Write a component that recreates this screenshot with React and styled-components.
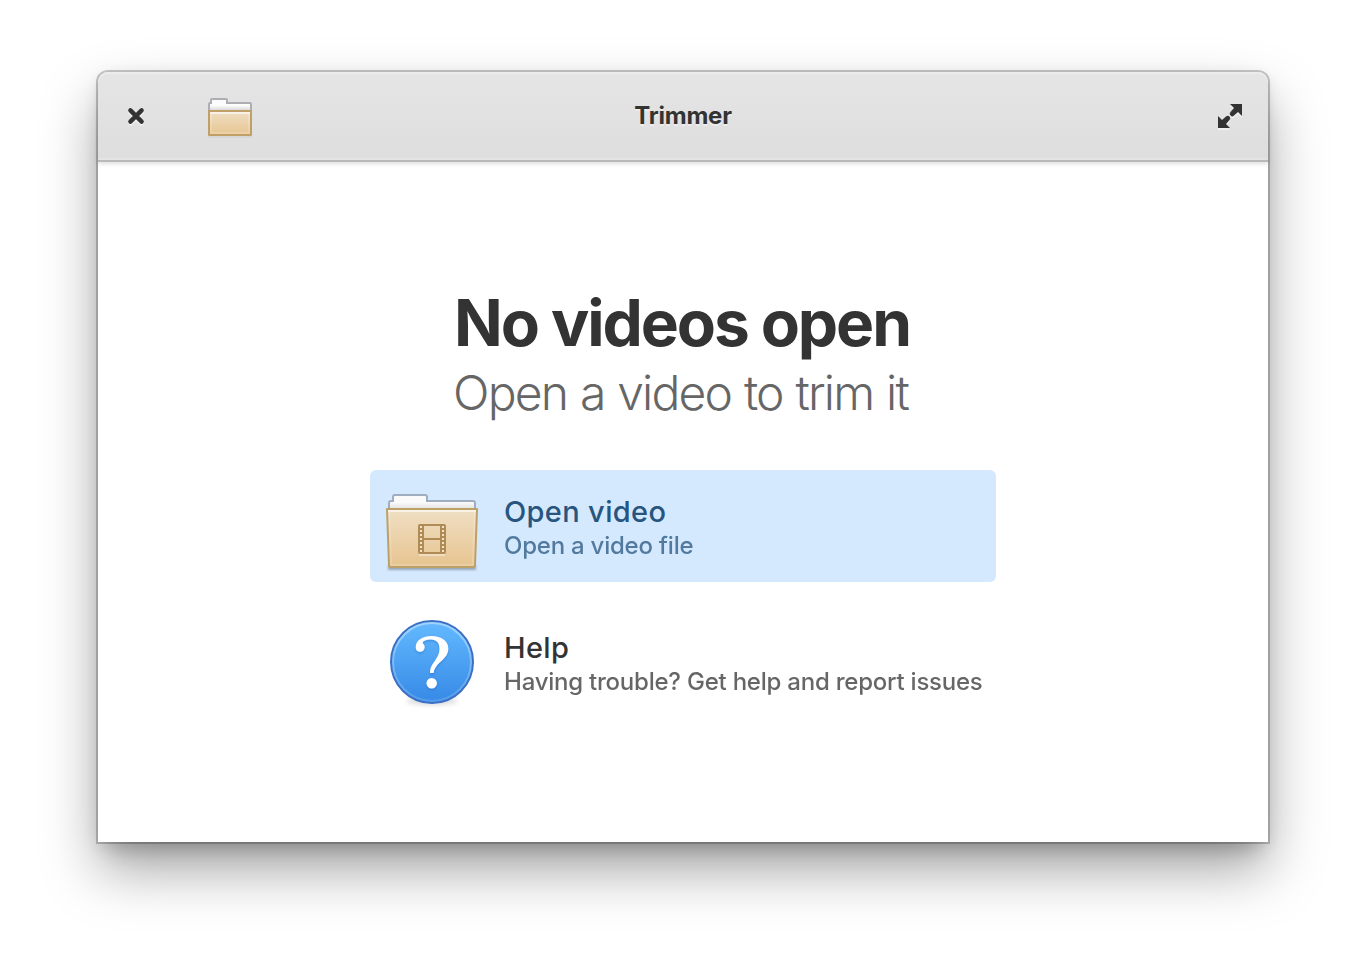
import React from "react";
import styled, { createGlobalStyle } from "styled-components";

const GlobalStyle = createGlobalStyle`
  * { box-sizing: border-box; }
  body { margin: 0; background: #fff; font-family: Inter, "Open Sans", sans-serif; color: #333; }
`;

const Desktop = styled.main`
  height: 966px;
  padding: 72px 98px 0;
  overflow: hidden;
`;

const Window = styled.section`
  height: 770px;
  display: flex;
  flex-direction: column;
  background: #fff;
  border-radius: 10px 10px 0 0;
  box-shadow: 0 0 0 2px rgba(0, 0, 0, 0.2), 0 28px 56px rgba(0, 0, 0, 0.35),
    0 20px 20px -10px rgba(0, 0, 0, 0.14), 0 4px 16px rgba(0, 0, 0, 0.09);
`;

const HeaderBar = styled.header`
  height: 90px;
  flex: none;
  display: grid;
  grid-template-columns: 1fr auto 1fr;
  align-items: center;
  padding: 0 22px 0 30px;
  border-radius: 10px 10px 0 0;
  border-bottom: 2px solid #b9b9b9;
  background: linear-gradient(#e5e5e5, #dedede);
  box-shadow: inset 0 2px 0 rgba(255, 255, 255, 0.28), inset 0 -2px 0 rgba(255, 255, 255, 0.2),
    0 2px 4px rgba(0, 0, 0, 0.13);
`;

const HeaderStart = styled.div`
  display: flex;
  align-items: center;
  gap: 60px;
`;

const HeaderEnd = styled.div`
  display: flex;
  justify-content: flex-end;
`;

const IconButton = styled.button`
  display: flex;
  padding: 0;
  border: 0;
  background: none;
  svg { display: block; overflow: visible; }
`;

const WindowTitle = styled.h1`
  margin: 0 8px 0 0;
  font-size: 24px;
  line-height: 30px;
  font-weight: 700;
  letter-spacing: -0.2px;
  text-shadow: 0 2px 0 rgba(255, 255, 255, 0.4);
`;

const Welcome = styled.div`
  flex: 1;
  display: flex;
  flex-direction: column;
  align-items: center;
  padding-top: 123px;
`;

const Heading = styled.h2`
  margin: 0 2px 0 0;
  font-size: 64px;
  line-height: 76px;
  font-weight: 700;
  letter-spacing: -2.1px;
  white-space: nowrap;
`;

const Subheading = styled.p`
  margin: 2px 5px 0 0;
  font-size: 48px;
  line-height: 60px;
  font-weight: 300;
  letter-spacing: -1.8px;
  word-spacing: 1px;
  color: #666;
  white-space: nowrap;
`;

const Actions = styled.div`
  width: 626px;
  margin-top: 47px;
  display: flex;
  flex-direction: column;
  gap: 24px;
`;

const Action = styled.button`
  height: 112px;
  padding: 0 14px;
  display: flex;
  align-items: center;
  gap: 24px;
  border: 0;
  border-radius: 6px;
  font-family: inherit;
  text-align: left;
  color: ${(p) => (p.$selected ? "#27557e" : "#333")};
  background: ${(p) => (p.$selected ? "#d4e9fe" : "transparent")};
  svg { display: block; flex: none; }
`;

const ActionText = styled.span`
  display: flex;
  flex-direction: column;
  padding-top: 6px;
`;

const ActionTitle = styled.span`
  font-size: 29px;
  line-height: 34px;
  font-weight: 500;
  letter-spacing: 0.35px;
`;

const ActionDescription = styled.span`
  font-size: 24px;
  line-height: 34px;
  font-weight: 500;
  letter-spacing: -0.23px;
  opacity: 0.75;
  white-space: nowrap;
`;

const CloseIcon = () => (
  <svg width="16" height="16" viewBox="0 0 16 16" fill="none" strokeWidth="4.4" strokeLinecap="round">
    <path d="M2.4 4.4l11.200 11.200M13.600 4.400L2.400 15.600" stroke="#fff" strokeOpacity=".5" />
    <path d="M2.400 2.400l11.200 11.200M13.600 2.400L2.400 13.600" stroke="#333" />
  </svg>
);

const MaximizeShape = () => (
  <>
    <path d="M12 0h12v12l-4-4-4 3.500a2.300 2.300 0 0 1-3.500-3.500l3.500-4z" />
    <path d="M12 24H0V12l4 4 4-3.500a2.300 2.300 0 0 1 3.500 3.500l-3.500 4z" />
  </>
);

const MaximizeIcon = () => (
  <svg width="28" height="24" viewBox="0 0 28 24">
    <g fill="#fff" opacity=".5" transform="translate(0 2)"><MaximizeShape /></g>
    <g fill="#333"><MaximizeShape /></g>
  </svg>
);

const FolderIcon = () => (
  <svg width="52" height="44" viewBox="-2 0 52 44">
    <defs>
      <linearGradient id="paperSmall" x1="0" y1="0" x2="0" y2="1">
        <stop offset=".5" stopColor="#fcfcfc" />
        <stop offset="1" stopColor="#ccc" />
      </linearGradient>
      <linearGradient id="frontSmall" x1="0" y1="0" x2="0" y2="1">
        <stop stopColor="#efdfc4" />
        <stop offset="1" stopColor="#e7c591" />
      </linearGradient>
    </defs>
    <path d="M2 43h44" stroke="#000" strokeOpacity=".04" strokeWidth="2" />
    <path d="M3 18V10q0-1 2-1V6q0-1 1-1h14q1 0 1 1v3h23q1 0 1 1v8z" fill="url(#paperSmall)" stroke="#acaeb3" strokeWidth="2" />
    <path d="M3 17h42v24H3z" fill="url(#frontSmall)" stroke="#c0a067" strokeWidth="2" strokeLinejoin="round" />
    <path d="M4 19h40" stroke="#fff" strokeOpacity=".6" strokeWidth="2" />
    <path d="M5 20v19h38V20" fill="none" stroke="#fff" strokeOpacity=".18" strokeWidth="2" />
  </svg>
);

const sprockets = [48, 52, 56, 60, 64, 68, 72];

const VideoFolderIcon = () => (
  <svg width="96" height="96" viewBox="0 0 96 96">
    <defs>
      <linearGradient id="paper" x1="0" y1="0" x2="0" y2="1">
        <stop offset=".5" stopColor="#fafafa" />
        <stop offset="1" stopColor="#ddd" />
      </linearGradient>
      <linearGradient id="front" x1="0" y1="0" x2="0" y2="1">
        <stop stopColor="#efdfc4" />
        <stop offset="1" stopColor="#e7c48f" />
      </linearGradient>
      <filter id="folderShadow" x="-10%" y="-200%" width="120%" height="500%">
        <feGaussianBlur stdDeviation="1.3" />
      </filter>
    </defs>
    <rect x="4" y="87" width="88" height="5" fill="#000" opacity=".28" filter="url(#folderShadow)" />
    <path d="M5 32V25q0-2 2-2h2v-4q0-2 2-2h30q2 0 2 2v4h46q2 0 2 2v7z" fill="url(#paper)" stroke="#a0adc0" strokeWidth="2" />
    <path d="M3 31h90l-2 56q0 2-2 2H7q-2 0-2-2z" fill="url(#front)" stroke="#bda066" strokeWidth="2" strokeLinejoin="round" />
    <path d="M4 33h88" stroke="#fff" strokeOpacity=".6" strokeWidth="2" />
    <path d="M5.2 34L7 87h82l1.800-53" fill="none" stroke="#fff" strokeOpacity=".18" strokeWidth="2" />
    <path d="M35 77h26" stroke="#fff" strokeOpacity=".4" strokeWidth="2" />
    <path d="M36 46h24q2 0 2 2v26q0 2-2 2H36q-2 0-2-2V48q0-2 2-2zM40 48v12h16V48zM40 62v12h16V62z" fill="#b08b55" fillRule="evenodd" />
    {sprockets.map((y) => (
      <React.Fragment key={y}>
        <rect x="36" y={y} width="2" height="2" fill="#f3e3c9" />
        <rect x="58" y={y} width="2" height="2" fill="#f3e3c9" />
      </React.Fragment>
    ))}
  </svg>
);

const HelpIcon = () => (
  <svg width="96" height="96" viewBox="0 0 96 96">
    <defs>
      <linearGradient id="disc" x1="0" y1="0" x2="0" y2="1">
        <stop stopColor="#64baff" />
        <stop offset="1" stopColor="#3689e6" />
      </linearGradient>
      <linearGradient id="discRim" x1="0" y1="0" x2="0" y2="1">
        <stop stopColor="#fff" stopOpacity=".4" />
        <stop offset="1" stopColor="#fff" stopOpacity=".15" />
      </linearGradient>
      <filter id="discShadow" x="-20%" y="-100%" width="140%" height="300%">
        <feGaussianBlur stdDeviation="2.5" />
      </filter>
      <filter id="markShadow" x="-20%" y="-20%" width="140%" height="140%">
        <feDropShadow dx="0" dy="1.500" stdDeviation="1" floodColor="#0d52bf" floodOpacity=".35" />
      </filter>
    </defs>
    <ellipse cx="48" cy="87" rx="26" ry="4" opacity=".14" filter="url(#discShadow)" />
    <circle cx="48" cy="48" r="41" fill="url(#disc)" stroke="#3a70c6" strokeWidth="2" />
    <circle cx="48" cy="48" r="39" fill="none" stroke="url(#discRim)" strokeWidth="2" />
    <g fill="#fff" filter="url(#markShadow)">
      <path d="M31.700 33.500C31.700 26 39 22 47.500 22C57.500 22 64.300 27 64.300 34.500C64.300 46 50.800 48 49.700 59H46C45.300 50 55.500 45 55.500 35C55.500 29 52.500 25.600 47 25.600C42.500 25.600 39 27 38.500 29.200C40.800 30.500 41.500 34 39.500 36.200C37 39 31.700 38 31.700 33.500z" />
      <circle cx="47.700" cy="69.300" r="5.200" />
    </g>
  </svg>
);

export default function App() {
  return (
    <>
      <GlobalStyle />
      <Desktop>
        <Window>
          <HeaderBar>
            <HeaderStart>
              <IconButton aria-label="Close"><CloseIcon /></IconButton>
              <IconButton aria-label="Open"><FolderIcon /></IconButton>
            </HeaderStart>
            <WindowTitle>Trimmer</WindowTitle>
            <HeaderEnd>
              <IconButton aria-label="Maximize"><MaximizeIcon /></IconButton>
            </HeaderEnd>
          </HeaderBar>
          <Welcome>
            <Heading>No videos open</Heading>
            <Subheading>Open a video to trim it</Subheading>
            <Actions>
              <Action $selected>
                <VideoFolderIcon />
                <ActionText>
                  <ActionTitle>Open video</ActionTitle>
                  <ActionDescription>Open a video file</ActionDescription>
                </ActionText>
              </Action>
              <Action>
                <HelpIcon />
                <ActionText>
                  <ActionTitle>Help</ActionTitle>
                  <ActionDescription>Having trouble? Get help and report issues</ActionDescription>
                </ActionText>
              </Action>
            </Actions>
          </Welcome>
        </Window>
      </Desktop>
    </>
  );
}
